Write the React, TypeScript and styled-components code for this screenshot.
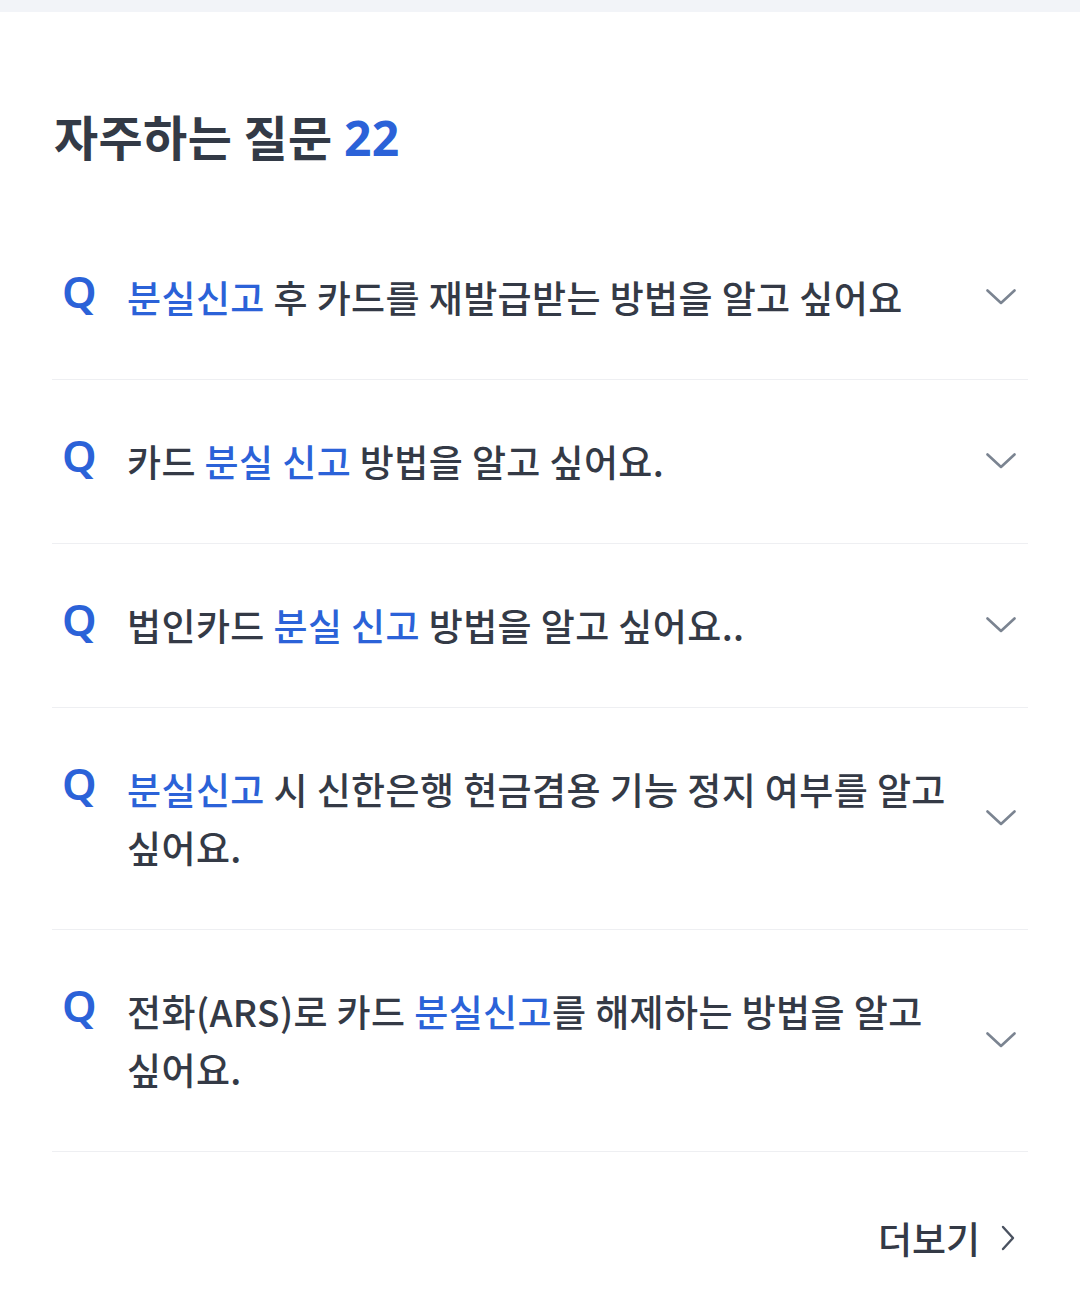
import React from "react";
import styled, { createGlobalStyle } from "styled-components";

const Global = createGlobalStyle`
  html, body { margin: 0; padding: 0; background: #ffffff; }
  body { font-family: "Noto Sans CJK KR", "Noto Sans", sans-serif; -webkit-font-smoothing: antialiased; }
`;

const Page = styled.div`
  width: 1080px;
  min-height: 1300px;
  background: #ffffff;
  display: flex;
  flex-direction: column;
`;

const TopBar = styled.div`
  height: 12px;
  background: #f2f4f8;
`;

const Section = styled.section`
  padding: 92px 52px 0 52px;
  display: flex;
  flex-direction: column;
`;

const Title = styled.h2`
  margin: 0 0 0 2px;
  font-size: 48px;
  line-height: 62px;
  font-weight: 700;
  color: #333a46;
  letter-spacing: 0.4px;
`;

const Count = styled.span`
  color: #2b62d8;
  font-family: "Noto Sans", "Noto Sans CJK KR", sans-serif;
`;

const List = styled.ul`
  list-style: none;
  margin: 47px 0 0 0;
  padding: 0;
`;

const Item = styled.li`
  display: flex;
  align-items: center;
  padding: 52px 12px 53px 10px;
  border-bottom: 1px solid #eeeff2;
`;

const QMark = styled.span`
  flex: 0 0 65px;
  align-self: flex-start;
  font-family: "Noto Sans", sans-serif;
  font-size: 44px;
  font-weight: 600;
  line-height: 58px;
  color: #2b62d8;
  margin-top: -6px;
`;

const Question = styled.p`
  flex: 1;
  margin: 0;
  padding-right: 30px;
  font-size: 37px;
  line-height: 58px;
  font-weight: 500;
  color: #343a46;
  letter-spacing: 0.4px;
  word-break: keep-all;
`;

const Hl = styled.span`
  color: #2b62d8;
`;

const Chevron = styled.svg`
  flex: 0 0 30px;
  width: 30px;
  height: 16px;
`;

const Footer = styled.div`
  display: flex;
  justify-content: flex-end;
  align-items: center;
  gap: 20px;
  padding: 61px 12px 0 0;
`;

const MoreText = styled.span`
  font-size: 37px;
  line-height: 50px;
  font-weight: 500;
  color: #343a46;
`;

const MoreIcon = styled.svg`
  width: 16px;
  height: 26px;
`;

type Part = { t: string; hl?: boolean };

const faqs: Part[][] = [
  [{ t: "분실신고", hl: true }, { t: " 후 카드를 재발급받는 방법을 알고 싶어요" }],
  [{ t: "카드 " }, { t: "분실 신고", hl: true }, { t: " 방법을 알고 싶어요." }],
  [{ t: "법인카드 " }, { t: "분실 신고", hl: true }, { t: " 방법을 알고 싶어요.." }],
  [{ t: "분실신고", hl: true }, { t: " 시 신한은행 현금겸용 기능 정지 여부를 알고 싶어요." }],
  [{ t: "전화(ARS)로 카드 " }, { t: "분실신고", hl: true }, { t: "를 해제하는 방법을 알고 싶어요." }],
];

const ChevronDown = () => (
  <Chevron viewBox="0 0 30 16" fill="none">
    <path d="M1.5 1.5 L15 14 L28.5 1.5" stroke="#7b8491" strokeWidth="2.6" strokeLinecap="round" strokeLinejoin="round" />
  </Chevron>
);

export default function App() {
  return (
    <Page>
      <Global />
      <TopBar />
      <Section>
        <Title>
          자주하는 질문 <Count>22</Count>
        </Title>
        <List>
          {faqs.map((parts, i) => (
            <Item key={i}>
              <QMark>Q</QMark>
              <Question>
                {parts.map((p, j) => (p.hl ? <Hl key={j}>{p.t}</Hl> : <React.Fragment key={j}>{p.t}</React.Fragment>))}
              </Question>
              <ChevronDown />
            </Item>
          ))}
        </List>
        <Footer>
          <MoreText>더보기</MoreText>
          <MoreIcon viewBox="0 0 16 26" fill="none">
            <path d="M3 2 L13 13 L3 24" stroke="#4a5260" strokeWidth="2.4" strokeLinecap="round" strokeLinejoin="round" />
          </MoreIcon>
        </Footer>
      </Section>
    </Page>
  );
}
